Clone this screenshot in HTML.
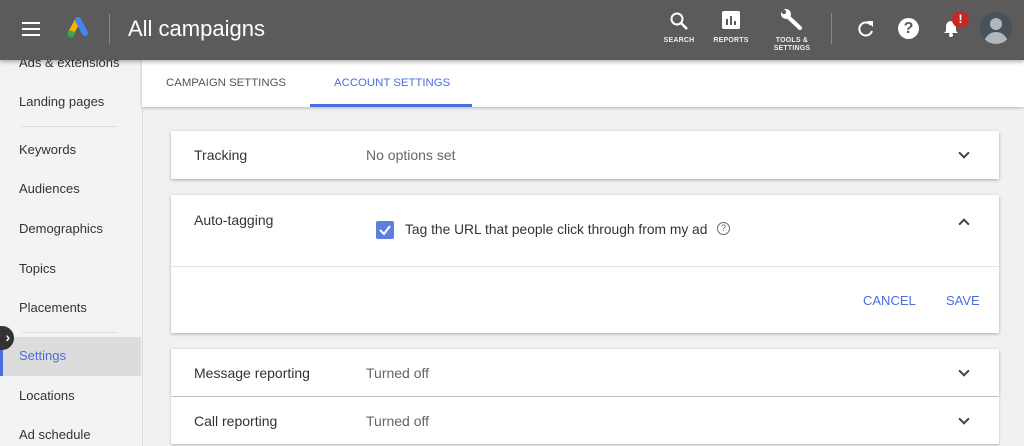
<!DOCTYPE html><html><head><style>
body{margin:0;width:1024px;height:446px;overflow:hidden;font-family:"Liberation Sans",sans-serif;background:#f1f1f1;position:relative}
.hd{position:absolute;left:0;top:0;width:1024px;height:60px;background:#5b5b5b;box-shadow:0 2px 4px rgba(0,0,0,.3);z-index:5;color:#fff}
.a{position:absolute}
.sb{position:absolute;left:0;top:0;width:142px;height:446px;background:#f3f3f3;border-right:1px solid #ddd}
.si{position:absolute;left:19px;font-size:13px;color:#333}
.tabs{position:absolute;left:142px;top:60px;width:882px;height:47px;background:#fff;box-shadow:0 1px 3px rgba(0,0,0,.25)}
.card{position:absolute;left:171px;width:828px;background:#fff;box-shadow:0 1px 3px rgba(0,0,0,.3)}
.lbl{position:absolute;left:23px;font-size:14px;color:#333}
.val{position:absolute;left:195px;font-size:14px;color:#666}
.chev{position:absolute;right:31px;width:6px;height:6px;border-right:2px solid #444;border-bottom:2px solid #444}
.ic{position:absolute;font-size:7px;font-weight:bold;text-align:center;color:#eee;letter-spacing:.2px}
</style></head><body>
<div class="sb">
<div class="si" style="top:55px">Ads &amp; extensions</div>
<div class="si" style="top:94px">Landing pages</div>
<div class="a" style="left:22px;top:126px;width:95px;height:1px;background:#ddd"></div>
<div class="si" style="top:142px">Keywords</div>
<div class="si" style="top:181px">Audiences</div>
<div class="si" style="top:221px">Demographics</div>
<div class="si" style="top:261px">Topics</div>
<div class="si" style="top:300px">Placements</div>
<div class="a" style="left:22px;top:332px;width:95px;height:1px;background:#ddd"></div>
<div class="a" style="left:0;top:337px;width:141px;height:39px;background:#dcdcdc"></div>
<div class="a" style="left:0;top:337px;width:3px;height:39px;background:#4a6ee0"></div>
<div class="si" style="top:348px;color:#4a6ee0">Settings</div>
<div class="si" style="top:388px">Locations</div>
<div class="si" style="top:427px">Ad schedule</div>
<div class="a" style="left:-10px;top:326px;width:24px;height:24px;border-radius:50%;background:#333;color:#fff;font-size:14px;font-weight:bold;line-height:23px;text-align:right">›&nbsp;</div>
</div>
<div class="hd">
<div class="a" style="left:22px;top:22px;width:18px;height:2px;background:#fff;box-shadow:0 6px 0 #fff,0 12px 0 #fff"></div>
<svg class="a" style="left:66px;top:17px" width="25" height="22" viewBox="0 0 25 22"><path d="M12 3 L5 16" stroke="#f4b400" stroke-width="6" stroke-linecap="round"/><path d="M12 3 L19 16" stroke="#4285f4" stroke-width="6" stroke-linecap="round"/><circle cx="5" cy="17" r="3.5" fill="#34a853"/></svg>
<div class="a" style="left:109px;top:14px;width:1px;height:30px;background:#888"></div>
<div class="a" style="left:128px;top:16px;font-size:22px">All campaigns</div>
<svg class="a" style="left:669px;top:11px" width="20" height="20" viewBox="0 0 20 20"><circle cx="8" cy="8" r="5.5" fill="none" stroke="#fff" stroke-width="2"/><path d="M12 12l6 6" stroke="#fff" stroke-width="2.5"/></svg>
<div class="ic" style="left:660px;top:37px;width:38px">SEARCH</div>
<svg class="a" style="left:722px;top:11px" width="18" height="18"><rect width="18" height="18" rx="2" fill="#fff"/><rect x="4" y="8" width="2" height="6" fill="#5b5b5b"/><rect x="8" y="5" width="2" height="9" fill="#5b5b5b"/><rect x="12" y="10" width="2" height="4" fill="#5b5b5b"/></svg>
<div class="ic" style="left:710px;top:37px;width:42px">REPORTS</div>
<svg class="a" style="left:780px;top:9px" width="24" height="22" viewBox="0 0 24 22"><path d="M4 4 L20 19" stroke="#fff" stroke-width="4" stroke-linecap="round"/><circle cx="6" cy="5" r="5" fill="#fff"/><circle cx="4" cy="3" r="2.2" fill="#5b5b5b"/></svg>
<div class="ic" style="left:768px;top:37px;width:48px;line-height:8px">TOOLS &amp;<br>SETTINGS</div>
<div class="a" style="left:831px;top:13px;width:1px;height:31px;background:#888"></div>
<svg class="a" style="left:856px;top:19px" width="20" height="20" viewBox="0 0 20 20"><path d="M15 6 A6.5 6.5 0 1 0 16 12" fill="none" stroke="#fff" stroke-width="2"/><path d="M11 2 L17 2 L17 8 Z" fill="#fff"/></svg>
<div class="a" style="left:898px;top:18px;width:21px;height:21px;border-radius:50%;background:#fff;color:#5b5b5b;font-weight:bold;font-size:16px;text-align:center;line-height:21px">?</div>
<svg class="a" style="left:941px;top:17px" width="20" height="22" viewBox="0 0 20 22"><path d="M3 16 L5 14 L5 9 A5 5 0 0 1 15 9 L15 14 L17 16 Z" fill="#fff"/><circle cx="10" cy="18" r="2" fill="#fff"/></svg>
<div class="a" style="left:952px;top:11px;width:17px;height:17px;border-radius:50%;background:#c62828;text-align:center;font-size:12px;font-weight:bold;line-height:17px">!</div>
<div class="a" style="left:980px;top:12px;width:32px;height:32px;border-radius:50%;background:#48525a;overflow:hidden"><div class="a" style="left:10px;top:6px;width:12px;height:12px;border-radius:50%;background:#b0b7bd"></div><div class="a" style="left:4px;top:20px;width:24px;height:14px;border-radius:12px 12px 0 0;background:#b0b7bd"></div></div>
</div>
<div class="tabs">
<div class="a" style="left:24px;top:17px;font-size:11.4px;color:#555">CAMPAIGN SETTINGS</div>
<div class="a" style="left:192px;top:17px;font-size:11.4px;color:#4a6ee0">ACCOUNT SETTINGS</div>
<div class="a" style="left:168px;top:44px;width:162px;height:3px;background:#4a6ee0"></div>
</div>
<div class="card" style="top:131px;height:48px"><div class="lbl" style="top:16px">Tracking</div><div class="val" style="top:16px">No options set</div><div class="chev" style="top:18px;transform:rotate(45deg)"></div></div>
<div class="card" style="top:195px;height:138px">
<div class="lbl" style="top:17px">Auto-tagging</div>
<div class="a" style="left:205px;top:26px;width:18px;height:18px;border-radius:2px;background:#5c7fe0"><svg width="18" height="18"><path d="M4 9 L8 13 L14 5" fill="none" stroke="#fff" stroke-width="2"/></svg></div>
<div class="a" style="left:234px;top:27px;font-size:13.8px;color:#333">Tag the URL that people click through from my ad</div>
<div class="a" style="left:546px;top:27px;width:11px;height:11px;border:1px solid #666;border-radius:50%;font-size:9px;line-height:11px;text-align:center;color:#666">?</div>
<div class="chev" style="top:25px;transform:rotate(-135deg)"></div>
<div class="a" style="left:0;top:71px;width:828px;height:1px;background:#e3e3e3"></div>
<div class="a" style="left:692px;top:98px;font-size:13px;color:#4a6ee0">CANCEL</div>
<div class="a" style="left:775px;top:98px;font-size:13px;color:#4a6ee0">SAVE</div>
</div>
<div class="card" style="top:349px;height:47px"><div class="lbl" style="top:16px">Message reporting</div><div class="val" style="top:16px">Turned off</div><div class="chev" style="top:18px;transform:rotate(45deg)"></div></div>
<div class="card" style="top:397px;height:47px;box-shadow:0 1px 2px rgba(0,0,0,.25)"><div class="lbl" style="top:16px">Call reporting</div><div class="val" style="top:16px">Turned off</div><div class="chev" style="top:18px;transform:rotate(45deg)"></div></div>
</body></html>
